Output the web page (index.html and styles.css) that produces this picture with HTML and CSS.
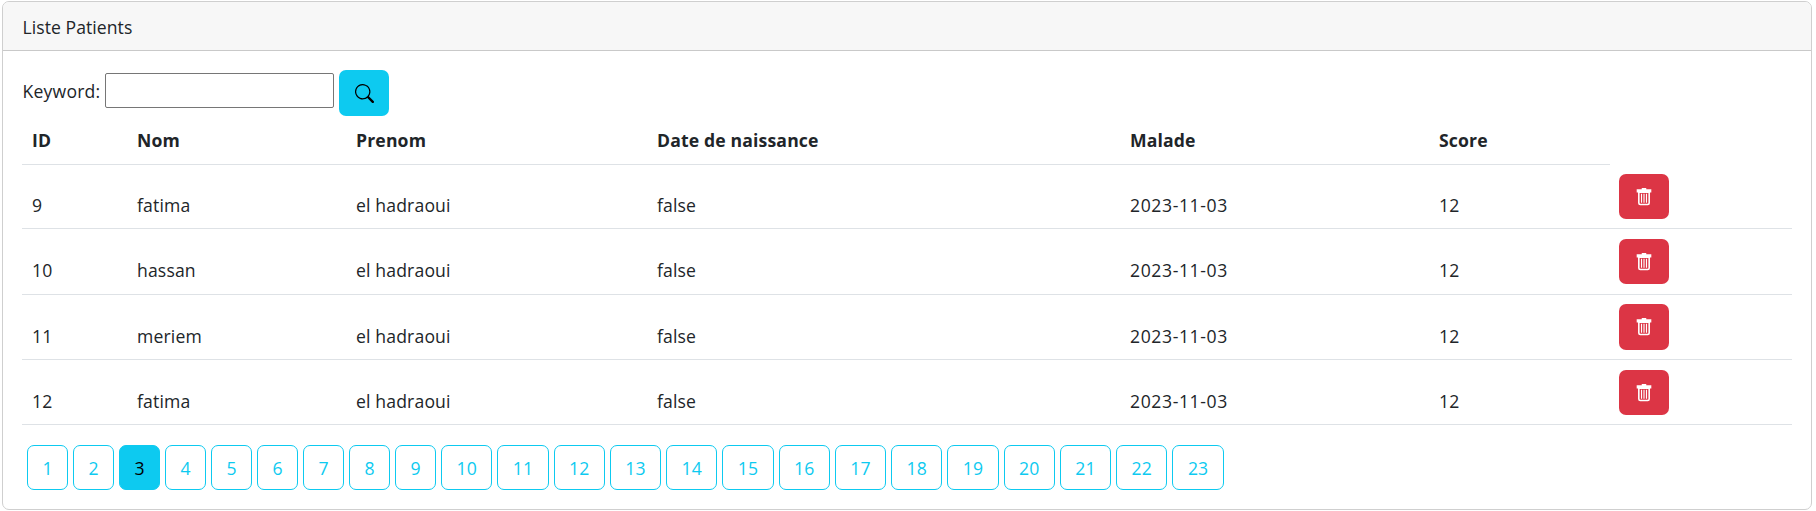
FILE: index.html
```html
<!DOCTYPE html>
<html lang="fr">
<head>
<meta charset="utf-8">
<title>Liste Patients</title>
<link rel="stylesheet" href="styles.css">
</head>
<body>
<svg class="sprite" aria-hidden="true">
  <symbol id="trash" viewBox="0 0 16 16"><path d="M6 0h4v1h4.500v3H1.500V1H6z"/><path fill-rule="evenodd" d="M2.700 3h10.600v10.400a2 2 0 0 1-2 2H4.700a2 2 0 0 1-2-2zM4.100 4.500v8.900a.7.7 0 0 0 .7.700h6.400a.7.7 0 0 0 .7-.7V4.500z"/><path d="M5.300 5h1v8h-1zM7.500 5h1v8h-1zM9.700 5h1v8h-1z"/></symbol>
</svg>
<main class="card">
  <header class="card-header">Liste Patients</header>
  <div class="card-body">
    <form class="search">
      <label for="kw">Keyword:</label>
      <input id="kw" class="keyword" type="text">
      <button class="btn btn-info" type="button" aria-label="Search"><svg class="icon-search" viewBox="0 0 16 16"><path d="M11.742 10.344a6.500 6.500 0 1 0-1.397 1.398h-.001c.03.04.062.078.098.115l3.850 3.850a1 1 0 0 0 1.415-1.414l-3.850-3.850a1.007 1.007 0 0 0-.115-.1zM12 6.500a5.500 5.500 0 1 1-11 0 5.500 5.500 0 0 1 11 0z"/></svg></button>
    </form>
    <table class="table">
      <colgroup><col class="c-id"><col class="c-nom"><col class="c-prenom"><col class="c-date"><col class="c-malade"><col class="c-score"><col class="c-action"></colgroup>
      <thead><tr><th>ID</th><th>Nom</th><th>Prenom</th><th>Date de naissance</th><th>Malade</th><th>Score</th></tr></thead>
      <tbody>
        <tr class="row-first"><td>9</td><td>fatima</td><td>el hadraoui</td><td>false</td><td class="date">2023-11-03</td><td>12</td><td class="action"><button class="btn btn-danger" type="button" aria-label="Delete"><svg class="icon-trash"><use href="#trash"/></svg></button></td></tr>
        <tr class="row-tall"><td>10</td><td>hassan</td><td>el hadraoui</td><td>false</td><td class="date">2023-11-03</td><td>12</td><td class="action"><button class="btn btn-danger" type="button" aria-label="Delete"><svg class="icon-trash"><use href="#trash"/></svg></button></td></tr>
        <tr><td>11</td><td>meriem</td><td>el hadraoui</td><td>false</td><td class="date">2023-11-03</td><td>12</td><td class="action"><button class="btn btn-danger btn-tall" type="button" aria-label="Delete"><svg class="icon-trash"><use href="#trash"/></svg></button></td></tr>
        <tr class="row-last"><td>12</td><td>fatima</td><td>el hadraoui</td><td>false</td><td class="date">2023-11-03</td><td>12</td><td class="action"><button class="btn btn-danger" type="button" aria-label="Delete"><svg class="icon-trash"><use href="#trash"/></svg></button></td></tr>
      </tbody>
    </table>
    <nav class="pages">
      <a class="page">1</a><a class="page">2</a><a class="page current">3</a><a class="page">4</a><a class="page">5</a><a class="page">6</a><a class="page">7</a><a class="page">8</a><a class="page">9</a><a class="page wide">10</a><a class="page wide">11</a><a class="page wide">12</a><a class="page wide">13</a><a class="page wide">14</a><a class="page wide">15</a><a class="page wide">16</a><a class="page wide">17</a><a class="page wide">18</a><a class="page wide">19</a><a class="page wide">20</a><a class="page wide">21</a><a class="page wide">22</a><a class="page wide">23</a>
    </nav>
  </div>
</main>
</body>
</html>
```
FILE: styles.css
```css
* { box-sizing: border-box; }
body {
  margin: 0;
  padding: 1px 4px 0 2px;
  height: 511px;
  overflow: hidden;
  background: #fff;
  color: #212529;
  font: 17.6px/27px "Open Sans", "Noto Sans", sans-serif;
  letter-spacing: .15px;
}
.sprite { display: none; }
.card { height: 509px; border: 1px solid #cfcfcf; border-radius: 7px; overflow: hidden; }
.card-header { height: 49px; padding: 12px 19.5px 0; background: #f7f7f7; border-bottom: 1px solid #c9c9c9; letter-spacing: .05px; }
.card-body { padding: 19px 19px 0; }
.search { display: flex; height: 48px; }
.search label { width: 83px; padding-top: 8px; padding-left: .5px; white-space: nowrap; letter-spacing: .2px; }
.keyword { width: 229px; height: 35px; margin: 3px 5px 0 0; padding: 1px 2px; border: 1px solid #767676; border-radius: 2px; background: #fff; font: inherit; }
.btn { display: flex; align-items: center; justify-content: center; width: 50px; height: 45px; padding: 0; border: 0; border-radius: 7px; }
.btn-info { height: 46px; background: #0dcaf0; color: #000; }
.btn-danger { background: #dc3545; color: #fff; }
.btn-tall { height: 46px; }
.btn svg { fill: currentColor; }
.icon-search { width: 19px; height: 19px; }
.icon-trash { width: 18px; height: 18px; }
.table { width: 1770px; table-layout: fixed; border-collapse: separate; border-spacing: 0; }
.c-id { width: 106px; }
.c-nom { width: 219px; }
.c-prenom { width: 301px; }
.c-date { width: 473px; }
.c-malade { width: 309px; }
.c-score { width: 180px; }
.c-action { width: 182px; }
th, td { height: 65px; padding: 0 9px 9px; border-bottom: 1px solid #dee2e6; text-align: left; vertical-align: bottom; white-space: nowrap; }
th { height: 47px; padding-bottom: 10px; font-weight: 700; }
th:first-child, td:first-child { padding-left: 10px; }
.row-first td { height: 64px; }
.row-tall td { height: 66px; padding-bottom: 10px; }
.date { letter-spacing: .6px; }
.action { padding-top: 9px; padding-bottom: 0; vertical-align: top; }
.row-tall .action, .row-last .action { padding-top: 10px; padding-bottom: 0; }
.pages { display: flex; gap: 5px; padding: 20px 5px 0; }
.page { width: 41px; height: 45px; border: 1px solid #0dcaf0; border-radius: 7px; color: #0dcaf0; line-height: 44px; text-align: center; }
.wide { width: 51.280px; }
.current { background: #0dcaf0; color: #000; }
```
